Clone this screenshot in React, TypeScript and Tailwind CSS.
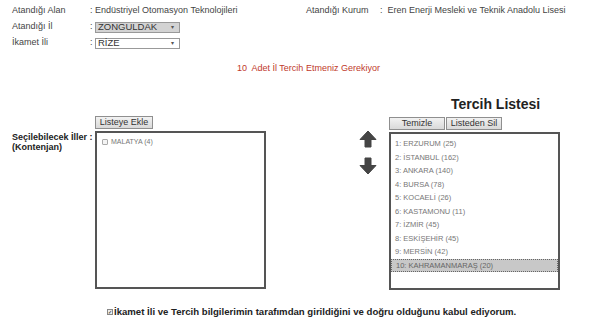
import React from 'react';

const tercihler = [
  '1: ERZURUM (25)',
  '2: İSTANBUL (162)',
  '3: ANKARA (140)',
  '4: BURSA (78)',
  '5: KOCAELİ (26)',
  '6: KASTAMONU (11)',
  '7: İZMİR (45)',
  '8: ESKİŞEHİR (45)',
  '9: MERSİN (42)',
  '10: KAHRAMANMARAŞ (20)',
];

const Btn: React.FC<{ label: string; className?: string }> = ({ label, className }) => (
  <button
    className={`h-[13px] border border-[#8f8f8f] bg-gradient-to-b from-[#f2f2f2] to-[#d9d9d9] text-[9px] leading-[11px] text-[#333] ${className ?? ''}`}
  >
    {label}
  </button>
);

const FakeSelect: React.FC<{ value: string; disabled?: boolean }> = ({ value, disabled }) => (
  <div
    className={`flex h-[11px] w-[85px] items-center justify-between border border-[#999] pl-[2px] pr-[5px] text-[9.5px] leading-none text-[#333] ${
      disabled ? 'bg-[#d3d3d3]' : 'bg-white'
    }`}
  >
    <span>{value}</span>
    <span className="text-[6px] text-[#555]">▾</span>
  </div>
);

const HeavyArrow: React.FC<{ down?: boolean }> = ({ down }) => (
  <svg viewBox="0 0 18 18" className={`h-[18px] w-[18px] ${down ? 'rotate-180' : ''}`}>
    <path d="M9 1 L17 9.5 L12 9.5 L12 17 L6 17 L6 9.5 L1 9.5 Z" fill="#454545" strokeLinejoin="round" stroke="#454545" strokeWidth="1" />
  </svg>
);

export default function App() {
  return (
    <div className="relative h-[322px] w-[600px] overflow-hidden bg-white font-['Liberation_Sans',Arial,sans-serif] text-[#444]">
      {/* üst bilgiler */}
      <div className="pl-[12px] pt-[3px] text-[9px]">
        <div className="flex h-[16px] items-center">
          <span className="w-[78px]">Atandığı Alan</span>
          <span className="w-[216px]">: Endüstriyel Otomasyon Teknolojileri</span>
          <span className="w-[74px]">Atandığı Kurum</span>
          <span>:</span>
          <span className="ml-[5px]">Eren Enerji Mesleki ve Teknik Anadolu Lisesi</span>
        </div>
        <div className="flex h-[16px] items-center">
          <span className="w-[78px]">Atandığı İl</span>
          <span className="w-[5px]">:</span>
          <FakeSelect value="ZONGULDAK" disabled />
        </div>
        <div className="flex h-[16px] items-center">
          <span className="w-[78px]">İkamet İli</span>
          <span className="w-[5px]">:</span>
          <FakeSelect value="RİZE" />
        </div>
      </div>

      <div className="mt-[10px] h-[14px] pl-[237px] text-[9px] leading-[14px] text-[#c0392b]">
        10&nbsp; Adet İl Tercih Etmeniz Gerekiyor
      </div>

      {/* listeler */}
      <div className="mt-[17px] flex items-start">
        <div className="w-[95px] whitespace-nowrap pl-[12px] pt-[40px] text-[9px] font-bold leading-[10px] text-[#222]">
          <div>Seçilebilecek İller :</div>
          <div>(Kontenjan)</div>
        </div>

        <div className="flex w-[171px] flex-col items-start pt-[24px]">
          <Btn label="Listeye Ekle" className="w-[58px]" />
          <div className="mt-[2px] h-[158px] w-[171px] border-2 border-[#555] px-[5px] pt-[4px]">
            <div className="flex items-center gap-[3px] text-[7px] text-[#777]">
              <span className="h-[6px] w-[6px] rounded-[1px] border border-[#aaa] bg-[#f4f4f4]" />
              <span>MALATYA (4)</span>
            </div>
          </div>
        </div>

        <div className="ml-[93px] flex w-[30px] flex-col gap-[9px] pt-[38px]">
          <HeavyArrow />
          <HeavyArrow down />
        </div>

        <div className="flex w-[171px] flex-col">
          <div className="h-[25px] whitespace-nowrap pl-[62px] text-[14px] font-bold leading-[25px] text-[#222]">Tercih Listesi</div>
          <div className="flex gap-[1px]">
            <Btn label="Temizle" className="h-[12px] w-[56px]" />
            <Btn label="Listeden Sil" className="h-[12px] w-[56px]" />
          </div>
          <div className="mt-[2px] h-[158px] w-[171px] border-2 border-[#555] pt-[3px] text-[7.5px] text-[#777]">
            {tercihler.map((t, i) => (
              <div
                key={t}
                className={`flex h-[13.5px] items-center pl-[4px] ${
                  i === tercihler.length - 1 ? 'border border-dotted border-[#666] bg-[#c8c8c8] pl-[3px] text-[#666]' : ''
                }`}
              >
                {t}
              </div>
            ))}
          </div>
        </div>
      </div>

      <div className="mt-[15px] flex items-center pl-[107px] text-[9.6px] font-bold text-[#222]">
        <span className="mr-[1px] flex h-[6px] w-[6px] items-center justify-center border border-[#888] bg-[#eee] text-[5px] leading-none text-[#333]">
          ✓
        </span>
        <span>İkamet İli ve Tercih bilgilerimin tarafımdan girildiğini ve doğru olduğunu kabul ediyorum.</span>
      </div>
    </div>
  );
}
